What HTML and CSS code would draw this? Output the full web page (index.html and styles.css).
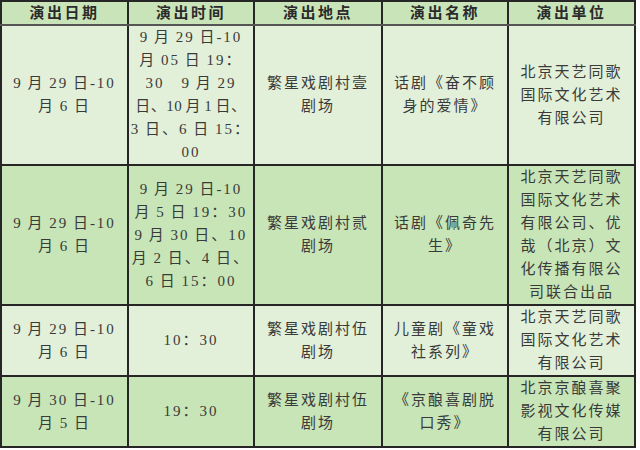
FILE: index.html
```html
<!DOCTYPE html>
<html lang="zh-CN">
<head>
<meta charset="utf-8">
<link rel="stylesheet" href="styles.css">
</head>
<body>
<table class="schedule">
  <colgroup>
    <col class="c1"><col class="c2"><col class="c3"><col class="c4"><col class="c5">
  </colgroup>
  <thead>
    <tr class="head">
      <th>演出日期</th><th>演出时间</th><th>演出地点</th><th>演出名称</th><th>演出单位</th>
    </tr>
  </thead>
  <tbody>
    <tr class="light r1">
      <td>9 月 29 日-10<br>月 6 日</td>
      <td>9 月 29 日-10<br>月 05 日 19：<br>30　9 月 29<br><span class="tight">日、10 月 1 日、</span><br>3 日、6 日 15：<br>00</td>
      <td>繁星戏剧村壹<br>剧场</td>
      <td>话剧《奋不顾<br>身的爱情》</td>
      <td>北京天艺同歌<br>国际文化艺术<br>有限公司</td>
    </tr>
    <tr class="dark r2">
      <td>9 月 29 日-10<br>月 6 日</td>
      <td>9 月 29 日-10<br>月 5 日 19：30<br>9 月 30 日、10<br>月 2 日、4 日、<br>6 日 15：00</td>
      <td>繁星戏剧村贰<br>剧场</td>
      <td>话剧《佩奇先<br>生》</td>
      <td>北京天艺同歌<br>国际文化艺术<br>有限公司、优<br>哉（北京）文<br>化传播有限公<br>司联合出品</td>
    </tr>
    <tr class="light r3">
      <td>9 月 29 日-10<br>月 6 日</td>
      <td>10：30</td>
      <td>繁星戏剧村伍<br>剧场</td>
      <td>儿童剧《童戏<br>社系列》</td>
      <td>北京天艺同歌<br>国际文化艺术<br>有限公司</td>
    </tr>
    <tr class="dark r4">
      <td>9 月 30 日-10<br>月 5 日</td>
      <td>19：30</td>
      <td>繁星戏剧村伍<br>剧场</td>
      <td>《京酿喜剧脱<br>口秀》</td>
      <td>北京京酿喜聚<br>影视文化传媒<br>有限公司</td>
    </tr>
  </tbody>
</table>
</body>
</html>
```
FILE: styles.css
```css
html, body {
  margin: 0;
  padding: 0;
  background: #ffffff;
}

.schedule {
  border-collapse: collapse;
  table-layout: fixed;
  width: 636px;
  border: 2px solid #808080;
  font-family: "Liberation Serif", "Noto Sans CJK SC", serif;
  font-size: 15px;
  line-height: 23px;
  color: #3a3a3a;
  letter-spacing: 2px;
  word-spacing: -1px;
}

.c1 { width: 127px; }
.c2 { width: 126px; }
.c3 { width: 128px; }
.c4 { width: 126px; }
.c5 { width: 127px; }

.schedule th,
.schedule td {
  padding: 0;
  text-align: center;
  vertical-align: middle;
  white-space: nowrap;
  border: 2px solid #262626;
}

.schedule th {
  font-weight: bold;
  height: 22px;
  line-height: 22px;
  color: #2b2b2b;
  letter-spacing: 2.5px;
  border-bottom-color: #555555;
}

.tight {
  letter-spacing: 0.5px;
}

.head { background: #c9e4b9; }
.light { background: #e2f0d9; }
.dark { background: #c7e5b6; }

.r1 td { height: 138px; }
.r2 td { height: 137px; }
.r3 td { height: 68px; }
.r4 td { height: 69px; }
```
